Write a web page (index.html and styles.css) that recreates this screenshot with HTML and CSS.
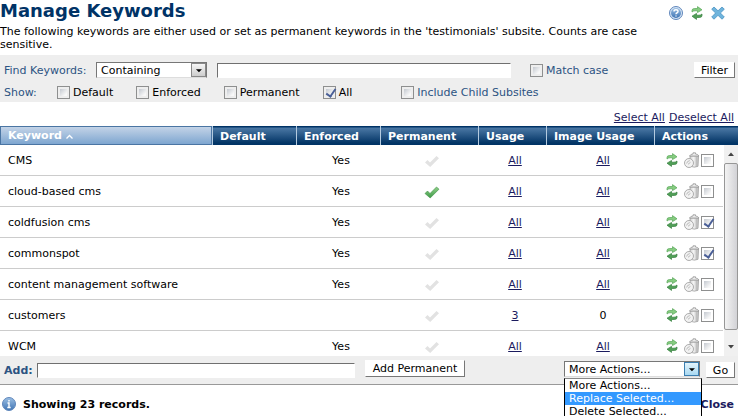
FILE: index.html
```
<!DOCTYPE html>
<html lang="en">
  <head>
    <meta charset="utf-8">
    <title>Manage Keywords</title>
    <link rel="stylesheet" href="styles.css">
  </head>
  <body>
    <svg class="sprite" aria-hidden="true">
      <defs>
        <linearGradient id="green" x1="0" y1="0" x2="0" y2="1">
          <stop offset="0" stop-color="#8fd088" />
          <stop offset="1" stop-color="#3f9a48" />
        </linearGradient>
        <linearGradient id="blue" x1="0" y1="0" x2="0" y2="1">
          <stop offset="0" stop-color="#9cc0e4" />
          <stop offset="1" stop-color="#3f74b4" />
        </linearGradient>
        <linearGradient id="steel" x1="0" y1="0" x2="1" y2="0">
          <stop offset="0" stop-color="#d0d0d0" />
          <stop offset=".4" stop-color="#f4f4f4" />
          <stop offset="1" stop-color="#bcbcbc" />
        </linearGradient>
        <symbol id="refresh" viewBox="0 0 12 14">
          <path d="M1 6V4.500Q1 2.500 3.500 2.500H6.500V.6L11 3.800 6.500 6.600V4.800H4Q2.300 4.800 1 6Z" fill="#86cc80" stroke="#56a658" stroke-width=".7" />
          <path d="M11 8V9.500Q11 11.500 8.500 11.500H5.500V13.400L1 10.200 5.500 7.400V9.200H8Q9.700 9.200 11 8Z" fill="#4f9f56" stroke="#37803f" stroke-width=".7" />
        </symbol>
        <symbol id="trash" viewBox="0 0 16 16">
          <path d="M6 4L6.500 14.300Q10.500 16 14 14.300L14.500 4Z" fill="url(#steel)" stroke="#a0a0a0" stroke-width=".8" />
          <path d="M12.300 5V14.500" stroke="#b4b4b4" stroke-width=".8" />
          <path d="M5.500 4Q6.500 2 9 2V.8H11.500V2Q14 2 15 4Z" fill="#ececec" stroke="#999" stroke-width=".8" />
          <circle cx="5" cy="11" r="4.500" fill="#f2f2f2" stroke="#999" stroke-width=".8" />
          <path d="M2.600 11.500Q3 9 5.800 8.600M4 12.300L6.500 10.300" fill="none" stroke="#bbb" />
        </symbol>
        <symbol id="check" viewBox="0 0 16 13">
          <path d="M1 7.500L3.500 5 6 7.500 12.500 1 15 3.200 6.200 12Z" />
        </symbol>
      </defs>
    </svg>

    <header class="title-bar">
      <h1>Manage Keywords</h1>
      <nav class="tools">
        <a href="#" aria-label="Help">
          <svg width="14" height="14" viewBox="0 0 14 14">
            <circle cx="7" cy="7" r="6.500" fill="#d6e4f4" stroke="#5f86bb" />
            <circle cx="7" cy="7" r="5" fill="url(#blue)" />
            <path d="M5 5.500Q5 3.800 7 3.800T9 5.500Q9 6.500 7.800 7 7 7.400 7 8.300M7 9.400V10.600" fill="none" stroke="#fff" stroke-width="1.400" />
          </svg>
        </a>
        <a href="#" aria-label="Refresh"><svg width="12" height="14"><use href="#refresh" /></svg></a>
        <a href="#" aria-label="Close window">
          <svg width="14" height="14" viewBox="0 0 14 14">
            <path d="M3 1L7 4.800 11 1 13.300 3.200 9.400 7 13.300 11 11 13.200 7 9.300 3 13.200 .7 11 4.600 7 .7 3.200Z" fill="#6fb4dc" stroke="#4a93c4" stroke-width=".8" />
          </svg>
        </a>
      </nav>
    </header>
    <p class="intro">The following keywords are either used or set as permanent keywords in the 'testimonials' subsite. Counts are case sensitive.</p>

    <form class="filters">
      <div class="filter-row">
        <label class="row-label" for="match">Find Keywords:</label>
        <span class="select match-select">
          <select id="match"><option>Containing</option></select>
          <svg class="arrow" viewBox="0 0 14 14"><path d="M4 6H11L7.500 9.500Z" /></svg>
        </span>
        <input class="text find-text" type="text" aria-label="Keyword text">
        <label class="option match-case"><input type="checkbox">Match case</label>
        <button class="btn filter-btn" type="button">Filter</button>
      </div>
      <div class="filter-row show-row">
        <span class="row-label">Show:</span>
        <label class="option dark"><input type="checkbox">Default</label>
        <label class="option dark"><input type="checkbox">Enforced</label>
        <label class="option dark"><input type="checkbox">Permanent</label>
        <label class="option dark"><input type="checkbox" checked>All</label>
        <label class="option subsites"><input type="checkbox">Include Child Subsites</label>
      </div>
    </form>

    <div class="select-links">
      <a href="#">Select All</a>
      <a href="#">Deselect All</a>
    </div>

    <div class="list">
      <table class="keywords">
        <colgroup>
          <col class="c-keyword"><col class="c-default"><col class="c-enforced"><col class="c-permanent"><col class="c-usage"><col class="c-image"><col class="c-actions">
        </colgroup>
        <thead>
          <tr>
            <th class="sorted">Keyword <svg width="7" height="5" viewBox="0 0 7 5"><path d="M.5 4.500L3.500 1.500 6.500 4.500" fill="none" stroke="#fff" stroke-width="1.300" /></svg></th>
            <th>Default</th>
            <th>Enforced</th>
            <th>Permanent</th>
            <th>Usage</th>
            <th>Image Usage</th>
            <th>Actions</th>
          </tr>
        </thead>
        <tbody id="rows"></tbody>
      </table>
      <div class="scrollbar" aria-hidden="true">
        <svg viewBox="0 0 14 18"><path d="M4 11H10L7 7.500Z" /></svg>
        <div class="thumb"></div>
        <svg viewBox="0 0 14 18"><path d="M4 7H10L7 10.500Z" /></svg>
      </div>
    </div>

    <form class="add-bar">
      <label class="add-label" for="add">Add:</label>
      <input class="text add-text" id="add" type="text">
      <button class="btn add-btn" type="button">Add Permanent</button>
      <div class="more">
        <span class="select hot">
          <select aria-label="More actions"><option>More Actions...</option></select>
          <svg class="arrow" viewBox="0 0 14 14"><path d="M4 6H11L7.500 9.500Z" /></svg>
        </span>
        <ul class="menu">
          <li>More Actions...</li>
          <li class="active">Replace Selected...</li>
          <li>Delete Selected...</li>
        </ul>
      </div>
      <button class="btn go-btn" type="button">Go</button>
    </form>

    <footer class="status">
      <svg width="14" height="14" viewBox="0 0 14 14">
        <circle cx="7" cy="7" r="6.500" fill="url(#blue)" stroke="#5f86bb" />
        <path d="M7 3V4.600M5.500 6H7V10.500M5.300 10.500H8.700" fill="none" stroke="#fff" stroke-width="1.400" />
      </svg>
      <strong>Showing 23 records.</strong>
      <a href="#" class="close">Close</a>
    </footer>

    <script src="script.js"></script>
  </body>
</html>
```
FILE: styles.css
```
* {
  box-sizing: border-box;
}

body {
  margin: 0;
  height: 100vh;
  overflow: hidden;
  background: #fff;
  color: #000;
  font: 11px/13px Verdana, "DejaVu Sans", sans-serif;
}

input,
select,
button {
  margin: 0;
  font: inherit;
  color: inherit;
}

a {
  color: #1b1b5e;
}

svg {
  display: block;
}

.sprite {
  position: absolute;
  width: 0;
  height: 0;
}

.title-bar {
  display: flex;
  align-items: flex-start;
  justify-content: space-between;
  height: 25px;
  padding-right: 13px;
}

h1 {
  margin: 0;
  font-size: 18px;
  line-height: 22px;
  color: #036;
}

.tools {
  display: flex;
  gap: 8px;
  padding-top: 6px;
}

.intro {
  margin: 0;
  padding-right: 60px;
  height: 30px;
}

/* filter panel */
.filters {
  background: #eee;
  height: 47px;
  padding: 7px 3px 0 4px;
  color: #2c5382;
}

.filter-row {
  display: flex;
  align-items: center;
  height: 16px;
}

.show-row {
  margin-top: 6px;
}

.row-label {
  width: 92px;
  white-space: nowrap;
}

.show-row .row-label {
  width: 53px;
}

.select {
  position: relative;
  display: block;
  height: 16px;
}

.select select {
  appearance: none;
  display: block;
  width: 100%;
  height: 100%;
  padding: 0 16px 0 4px;
  border: 1px solid #777;
  border-bottom-color: #ddd;
  border-radius: 0;
  background: #fff;
  color: #000;
}

.arrow {
  position: absolute;
  top: 1px;
  right: 1px;
  width: 15px;
  height: 14px;
  border: 1px solid #888;
  background: linear-gradient(#f6f6f6, #ccc);
}

.match-select {
  width: 111px;
}

.text {
  height: 15px;
  padding: 0 3px;
  border: 1px solid #fff;
  border-top-color: #707070;
  border-left-color: #707070;
  background: #fff;
}

.find-text {
  flex: 1;
  margin-left: 10px;
}

.btn {
  height: 16px;
  padding: 0;
  border: 1px solid #fff;
  border-right-color: #777;
  border-bottom-color: #777;
  background: #fff;
  color: #000;
  line-height: 13px;
  white-space: nowrap;
}

.filter-btn {
  width: 41px;
}

.option {
  display: flex;
  align-items: center;
  gap: 3px;
  white-space: nowrap;
}

.dark {
  color: #000;
}

.match-case {
  width: 164px;
  margin-left: 19px;
}

.show-row .option {
  margin-right: 23px;
}

.show-row .subsites {
  margin: 0 0 0 26px;
}

input[type="checkbox"] {
  appearance: none;
  position: relative;
  flex: none;
  width: 13px;
  height: 13px;
  border: 1px solid #8e8f8f;
  background: linear-gradient(135deg, #c4c9d0, #f8f8f8 80%) content-box #f4f4f4;
  padding: 2px;
}

input[type="checkbox"]:checked::after {
  content: "";
  position: absolute;
  left: 4px;
  top: 0;
  width: 4px;
  height: 8px;
  border: solid #4a5f97;
  border-width: 0 2px 2px 0;
  transform: rotate(35deg);
}

.select-links {
  display: flex;
  justify-content: flex-end;
  gap: 4px;
  height: 24px;
  padding: 9px 4px 0 0;
}

/* keyword list */
.list {
  position: relative;
  height: 230px;
  overflow: hidden;
}

.keywords {
  width: 100%;
  table-layout: fixed;
  border-spacing: 0;
}

.c-default,
.c-enforced,
.c-actions {
  width: 84px;
}

.c-permanent {
  width: 98px;
}

.c-usage {
  width: 68px;
}

.c-image {
  width: 108px;
}

th {
  height: 19px;
  padding: 1px 0 0 7px;
  border-left: 1px solid #b4cbe0;
  background: linear-gradient(#036 1px, #4a77a4 2px, #033566 17px, #036);
  color: #fff;
  text-align: left;
  white-space: nowrap;
}

th.sorted {
  padding: 0 0 0 7px;
  border: 1px solid #4a75a3;
  background: linear-gradient(#c3d3e7, #7ea6d0);
}

th svg {
  display: inline-block;
}

td {
  height: 31px;
  padding: 0;
  border-bottom: 1px solid #ccc;
  text-align: center;
}

td:first-child {
  padding-left: 8px;
  text-align: left;
}

td .check {
  margin: 2px auto 0;
  fill: #e2e2e2;
}

td .check.on {
  fill: url(#green);
  stroke: #3c8f43;
  stroke-width: .6;
}

td:nth-child(n + 3) {
  padding-left: 6px;
}

td .actions {
  display: flex;
  align-items: center;
  padding-left: 6px;
}

.actions svg + svg {
  margin: 0 1px 0 6px;
}

.scrollbar {
  position: absolute;
  top: 19px;
  right: 0;
  bottom: 0;
  width: 15px;
  display: flex;
  flex-direction: column;
  border-left: 1px solid #fff;
  background: #f0f0f0;
}

.scrollbar svg {
  flex: none;
  height: 18px;
  fill: #444;
}

.thumb {
  height: 167px;
  margin-bottom: auto;
  border: 1px solid #979797;
  border-radius: 2px;
  background: linear-gradient(90deg, #f3f3f3, #d2d2d6);
}

/* bottom bar */
.add-bar {
  display: flex;
  align-items: flex-start;
  height: 29px;
  padding: 4px 3px 0 4px;
  border-bottom: 1px solid #999;
  background: #eee;
}

.add-label {
  width: 33px;
  padding-top: 4px;
  color: #2c5382;
  font-weight: bold;
}

.add-text {
  flex: 1;
  margin-top: 3px;
}

.add-btn {
  width: 100px;
  height: 17px;
  margin-left: 10px;
}

.more {
  position: relative;
  width: 136px;
  margin: 1px 6px 0 99px;
}

.hot .arrow {
  border-color: #3c7fb1;
  background: linear-gradient(#e3f4fc, #a9d9f2);
}

.menu {
  position: absolute;
  z-index: 1;
  top: 17px;
  left: 0;
  width: 138px;
  margin: 0;
  padding: 0;
  border: 1px solid #000;
  border-top-color: #888;
  background: #fff;
  list-style: none;
}

.menu li {
  padding-left: 4px;
}

.menu .active {
  background: #39f;
  color: #fff;
}

.go-btn {
  width: 29px;
  margin-top: 2px;
}

.status {
  display: flex;
  align-items: center;
  gap: 7px;
  height: 38px;
  padding: 0 4px 0 2px;
}

.close {
  margin-left: auto;
  font-weight: bold;
  text-decoration: none;
}
```
FILE: script.js
```
const keywords = [
  { name: "CMS", enforced: true, usage: "All", images: "All" },
  { name: "cloud-based cms", enforced: true, permanent: true, usage: "All", images: "All" },
  { name: "coldfusion cms", enforced: true, usage: "All", images: "All", picked: true },
  { name: "commonspot", enforced: true, usage: "All", images: "All", picked: true },
  { name: "content management software", enforced: true, usage: "All", images: "All" },
  { name: "customers", usage: "3", images: "0" },
  { name: "WCM", enforced: true, usage: "All", images: "All" },
];

// a count of zero has nothing to link to
function count(value) {
  return value === "0" ? value : `<a href="#">${value}</a>`;
}

document.getElementById("rows").innerHTML = keywords
  .map(
    (k) => `<tr>
      <td>${k.name}</td>
      <td></td>
      <td>${k.enforced ? "Yes" : ""}</td>
      <td><svg class="check ${k.permanent ? "on" : ""}" width="16" height="13"><use href="#check" /></svg></td>
      <td>${count(k.usage)}</td>
      <td>${count(k.images)}</td>
      <td><div class="actions">
        <svg width="12" height="14"><use href="#refresh" /></svg>
        <svg width="16" height="16"><use href="#trash" /></svg>
        <input type="checkbox" aria-label="Select ${k.name}" ${k.picked ? "checked" : ""}>
      </div></td>
    </tr>`
  )
  .join("");
```
